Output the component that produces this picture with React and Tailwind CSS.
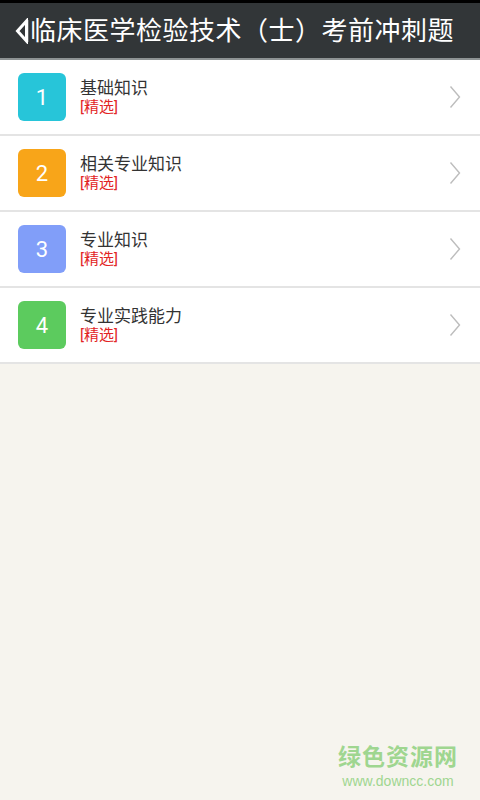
import React from "react";

const items = [
  { n: 1, title: "基础知识", color: "bg-[#27c5d9]" },
  { n: 2, title: "相关专业知识", color: "bg-[#f8a519]" },
  { n: 3, title: "专业知识", color: "bg-[#819ef9]" },
  { n: 4, title: "专业实践能力", color: "bg-[#5ccb5e]" },
];

const font = { fontFamily: '"Roboto", "Noto Sans CJK SC", sans-serif' };

const App = () => {
  return (
    <div className="w-[480px] h-[800px] flex flex-col bg-[#f6f4ee]" style={font}>
      <div className="h-[3px] bg-black" />
      <div className="h-[55px] bg-[#323638] flex items-center pl-[15px]">
        <svg width="14" height="26" viewBox="0 0 14 26" className="mr-[1px]">
          <path d="M11.5 3 L2.5 13 L11.5 23 Z" fill="none" stroke="#fff" strokeWidth="3" strokeLinejoin="miter" />
          <path d="M12.5 2 V24" stroke="#fff" strokeWidth="1.5" />
        </svg>
        <h1 className="text-white text-[26px] leading-none tracking-[0.5px]">临床医学检验技术（士）考前冲刺题</h1>
      </div>
      <div className="h-[2px] bg-[#8e9394]" />
      <div className="flex flex-col bg-white">
        {items.map((it) => (
          <div key={it.n} className="h-[76px] flex flex-col">
            <div className="flex-1 flex items-center pl-[18px] pr-[19px]">
              <div className={`w-[48px] h-[48px] rounded-[6px] ${it.color} flex items-center justify-center text-white text-[22px]`}>
                {it.n}
              </div>
              <div className="ml-[14px] flex-1 flex flex-col pt-[1px]">
                <span className="text-[#333] text-[17px] leading-[20px]">{it.title}</span>
                <span className="text-[#e22424] text-[15px] leading-[19px]">[精选]</span>
              </div>
              <svg width="12" height="24" viewBox="0 0 12 24">
                <path d="M1.5 1.5 L10.5 12 L1.5 22.5" fill="none" stroke="#bdbdbd" strokeWidth="1.4" />
              </svg>
            </div>
            <div className="h-[2px] bg-[#e4e4e4]" />
          </div>
        ))}
      </div>
      <div className="flex-1 flex flex-col justify-end items-end pr-[22px] pb-[10px]">
        <div className="flex flex-col items-center">
          <span className="text-[#9fd690] text-[23px] font-bold leading-[28px] tracking-[1px]">绿色资源网</span>
          <span className="text-[#9fd690] text-[14px] leading-[18px]" style={{ fontFamily: '"Liberation Sans", sans-serif' }}>www.downcc.com</span>
        </div>
      </div>
    </div>
  );
};

export default App;
